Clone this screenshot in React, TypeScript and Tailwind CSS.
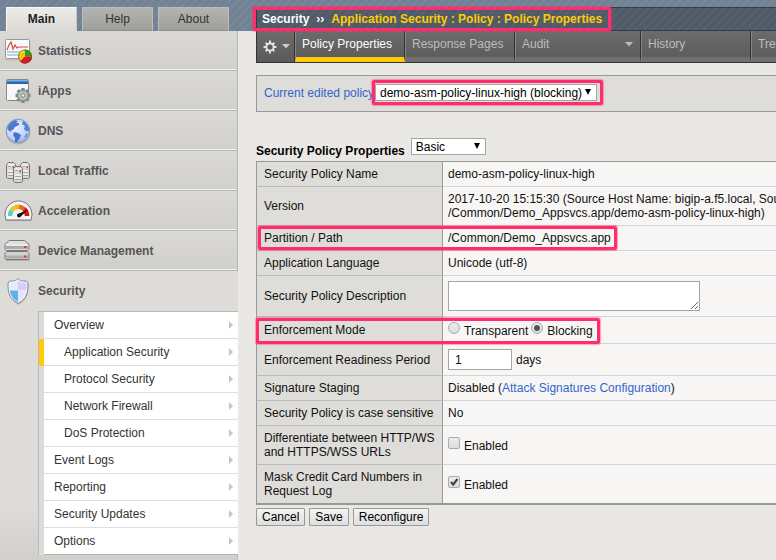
import React from "react";
import type { ReactNode } from "react";

function StatisticsIcon() {
  return (
    <svg width="30" height="28" viewBox="0 0 30 28" aria-hidden="true">
      <rect x="1.5" y="3" width="25" height="20.5" rx="1" fill="#aaa" opacity=".5" />
      <rect x="1.5" y="2.5" width="24" height="19" rx="1" fill="#fafafa" stroke="#999" />
      <path d="M3 15h21M3 18h14" stroke="#b9d0e8" strokeWidth="2" />
      <path d="M3 13l2-5 2-3 2 7 2-4 2 3 2-1h9" fill="none" stroke="#d4494d" strokeWidth="1.2" />
      <circle cx="21" cy="19.500" r="7" fill="#f3c40c" />
      <path d="M21 19.500V12.500a7 7 0 0 1 7 7z" fill="#25a021" />
      <path d="M21 19.500h7a7 7 0 0 1-12 5z" fill="#d91630" />
      <circle cx="21" cy="19.500" r="6.500" fill="none" stroke="#6b4a14" strokeOpacity=".6" />
      <path d="M16 17a6 6 0 0 1 4-3" stroke="#fff" strokeOpacity=".6" fill="none" />
    </svg>
  );
}

function IAppsIcon() {
  return (
    <svg width="30" height="28" viewBox="0 0 30 28" aria-hidden="true">
      <rect x="2.500" y="2.500" width="22" height="21" rx="1" fill="#f8f8fa" stroke="#888" />
      <path d="M3 3h21v4H3z" fill="#2b69ae" />
      <path d="M3 3h21v1.500H3z" fill="#79b1e6" />
      <g transform="translate(19 18.500)">
        <g stroke="#7f8987" strokeWidth="3.400">
          <path d="M0-7.500V7.500M-7.500 0H7.500M-5.300-5.300L5.300 5.300M5.300-5.300L-5.300 5.300" />
        </g>
        <circle r="5.500" fill="#adb5b3" stroke="#7f8987" />
        <circle r="3.200" fill="#c6cccb" />
        <circle r="1.800" fill="#f3f3f3" stroke="#737b7a" />
      </g>
    </svg>
  );
}

function DnsIcon() {
  return (
    <svg width="30" height="28" viewBox="0 0 30 28" aria-hidden="true">
      <defs>
        <radialGradient id="globe" cx=".4" cy=".35" r=".7">
          <stop offset="0" stopColor="#edf3ff" />
          <stop offset=".7" stopColor="#bcd0f7" />
          <stop offset="1" stopColor="#8ba9e3" />
        </radialGradient>
      </defs>
      <circle cx="14" cy="15.500" r="12" fill="#999" opacity=".5" />
      <circle cx="14" cy="14" r="11.800" fill="url(#globe)" stroke="#8593b0" />
      <path d="M4 9l3-4 4-2 3 1-2 2 3 0 0 2-4 2-2 3-2 0 1 2-3-1-2-3z" fill="#4f7ad2" />
      <path d="M10 15l4 1 3 2-1 3-3 4-2 0 0-4-2-3z" fill="#4874cf" />
      <path d="M19 4l3 2 3 5v3l-3 0-2-2 1-3-3-2z M22 17l2-1-2 4-2 1z" fill="#5680d8" />
    </svg>
  );
}

function Server({ x, y }: { x: number; y: number }) {
  return (
    <g transform={`translate(${x} ${y})`}>
      <path d="M.5 2.500l2-2h5l2 2v13l-1.500 1h-6l-1.500-1z" fill="#d9d9d9" stroke="#777" />
      <path d="M2 3h6M2 9h6M2 12h6" stroke="#fff" />
      <path d="M2 4.500h3M2 10.500h6M2 13.500h6" stroke="#a5a5a5" />
      <path d="M6.500 4h1.500v2H6.500z" fill="#f0353c" />
      <path d="M6.500 6.500h1.500V8H6.500z" fill="#76d85a" />
    </g>
  );
}

function LocalTrafficIcon() {
  return (
    <svg width="30" height="28" viewBox="0 0 30 28" aria-hidden="true">
      <Server x={2} y={5} />
      <Server x={16} y={5} />
      <Server x={9} y={9} />
    </svg>
  );
}

function AccelerationIcon() {
  return (
    <svg width="30" height="28" viewBox="0 0 30 28" aria-hidden="true">
      <path d="M.8 19c0-9 6-15 13.700-15s13.700 6 13.700 15l-1.200 5H2z" fill="#999" opacity=".6" />
      <path d="M1 18c0-8 6-14 13.500-14S28 10 28 18l-1 5H2z" fill="#f6f6f6" stroke="#777" />
      <g fill="none" strokeWidth="4.500">
        <path d="M6.200 19a8.600 8.600 0 0 1 1.400-5.500" stroke="#54d0c6" />
        <path d="M7.600 13.500a8.600 8.600 0 0 1 3.400-3" stroke="#d5cf2a" />
        <path d="M11 10.500a8.600 8.600 0 0 1 4-.8" stroke="#f0b716" />
        <path d="M15 9.700a8.600 8.600 0 0 1 5 2.300" stroke="#ee6a18" />
        <path d="M20 12a8.600 8.600 0 0 1 3 7" stroke="#dd1111" />
      </g>
      <path d="M24.500 12.500L16 20a2 2 0 0 1-2-3z" fill="#111" />
      <circle cx="15" cy="18.500" r="2" fill="#111" />
    </svg>
  );
}

function DeviceIcon() {
  return (
    <svg width="30" height="28" viewBox="0 0 30 28" aria-hidden="true">
      <path d="M1 22h25v2H2z" fill="#999" opacity=".6" />
      <path d="M5 3.500h15.500l4.500 4v5l-1 1H2l-1-1v-5z" fill="#dedede" stroke="#777" />
      <path d="M2 9h22v3H2z" fill="#aaa" />
      <path d="M2 8h22" stroke="#f4f4f4" />
      <path d="M3 14.500h20l2 2v5l-1 1H2l-1-1v-5z" fill="#d2d2d2" stroke="#777" />
      <path d="M2 18.500h22v3H2z" fill="#aeaeae" />
      <path d="M20 9h2.500v2H20zM20 18.500h2.500v2H20z" fill="#f0323a" />
    </svg>
  );
}

function ShieldIcon() {
  return (
    <svg width="30" height="28" viewBox="0 0 30 28" aria-hidden="true">
      <path d="M14.500 2c2.500 2 5 3 8 3l2 1c0 11-1 17-10 22-9-5-10-11-10-22l2-1c3 0 5.500-1 8-3z" fill="#999" opacity=".5" />
      <path d="M14 1.500c2 2 4.500 3 8 2.500l2 2c0 10-1 15-10 20.500C5 21 4 16 4 6l2-2c3.500.5 6-.5 8-2.500z" fill="#fff" stroke="#7d8797" />
      <path d="M14 3c-2 2-4.500 2.600-7.500 2.500L5.300 6.500c0 3 0 5 .5 7H14z" fill="#e3ecf6" />
      <path d="M14 3c2 2 4.500 2.600 7.500 2.500l1.200 1c0 3 0 5-.5 7H14z" fill="#d3cffa" />
      <path d="M5.800 13.500H14v11.800c-5-3.200-7.500-6.800-8.200-11.800z" fill="#62b0e8" />
      <path d="M22.200 13.500H14v11.800c5-3.200 7.500-6.800 8.200-11.800z" fill="#e6e3ff" />
    </svg>
  );
}

function GearIcon() {
  return (
    <svg width="14" height="14" viewBox="-7 -7 14 14" aria-hidden="true">
      <path d="M0-6.500V6.500M-6.500 0H6.500M-4.300-4.300L4.300 4.300M4.300-4.300L-4.300 4.300" stroke="#e2e2e2" strokeWidth="2" />
      <circle r="3.600" fill="#5c5c5c" stroke="#e2e2e2" strokeWidth="2" />
      <circle r="2.200" fill="#5c5c5c" />
    </svg>
  );
}

function DownArrow({ className }: { className: string }) {
  return (
    <svg width="8" height="5" viewBox="0 0 8 5" className={className} aria-hidden="true">
      <path d="M0 0h8L4 4.500z" fill="currentColor" />
    </svg>
  );
}

/* Pink outline that draws attention to part of the page. */
function Highlight({ className }: { className: string }) {
  return (
    <span
      aria-hidden="true"
      className={`pointer-events-none absolute z-10 rounded-[2px] border-[3px] border-[#ff2d6c] shadow-[0_0_1px_1px_rgba(255,45,108,0.4)] ${className}`}
    />
  );
}

const sections: { label: string; icon: ReactNode }[] = [
  { label: "Statistics", icon: <StatisticsIcon /> },
  { label: "iApps", icon: <IAppsIcon /> },
  { label: "DNS", icon: <DnsIcon /> },
  { label: "Local Traffic", icon: <LocalTrafficIcon /> },
  { label: "Acceleration", icon: <AccelerationIcon /> },
  { label: "Device Management", icon: <DeviceIcon /> },
];

const submenu = [
  { label: "Overview" },
  { label: "Application Security", nested: true, active: true },
  { label: "Protocol Security", nested: true },
  { label: "Network Firewall", nested: true },
  { label: "DoS Protection", nested: true },
  { label: "Event Logs" },
  { label: "Reporting" },
  { label: "Security Updates" },
  { label: "Options" },
];

const stripes =
  "bg-[#708294] bg-[repeating-linear-gradient(135deg,rgba(255,255,255,0.05)_0px,rgba(255,255,255,0.05)_2px,transparent_2px,transparent_6px)]";

function Sidebar() {
  return (
    <aside className="flex w-[238px] shrink-0 flex-col">
      <div className={`flex h-[31px] items-end gap-[5px] pl-[6px] ${stripes}`}>
        {["Main", "Help", "About"].map((tab, i) => (
          <button
            key={tab}
            type="button"
            className={`h-6 w-[71px] border text-center ${
              i === 0
                ? "border-[#f8f8f6] border-r-[#c8c8c4] border-b-[#dbdad6] bg-linear-to-b from-[#ecebe8] to-[#dbdad6] font-bold text-[#222]"
                : "border-[#bcbcba] border-b-[#8f8f8c] bg-linear-to-b from-[#b3b3af] to-[#9f9f9b] text-[#333]"
            }`}
          >
            {tab}
          </button>
        ))}
      </div>
      <nav className="flex flex-1 flex-col bg-linear-to-b from-[#dedcd9] from-90% to-[#d0cfcb]">
        {sections.map((s) => (
          <a
            key={s.label}
            href="#"
            className="flex h-10 items-center gap-1 border-r border-b border-[#b6b6b6] bg-linear-to-b from-[#dad9d6] to-[#d0cfcb] pl-1 font-bold text-[#555] shadow-[inset_0_-1px_0_#f0f0ee]"
          >
            {s.icon}
            {s.label}
          </a>
        ))}
        <a href="#" className="flex h-10 items-center gap-1 pl-1 font-bold text-[#555]">
          <ShieldIcon />
          Security
        </a>
        <ul className="ml-[38px] border-t border-l border-[#b9b9b9] bg-white">
          {submenu.map((m) => (
            <li
              key={m.label}
              className={`h-[27px] border-l-[5px] ${m.active ? "border-l-[#ffcb05]" : "border-l-[#dcdcdc]"}`}
            >
              <a
                href="#"
                className={`flex h-full items-center justify-between border-b pr-[5px] text-[#333] ${
                  m.nested ? "pl-5" : "pl-[10px]"
                } ${m.label === "Options" ? "border-b-[#b3b3b3]" : "border-b-[#dedede]"}`}
              >
                {m.label}
                <svg width="4" height="8" viewBox="0 0 4 8" aria-hidden="true">
                  <path d="M0 0l4 4-4 4z" fill="#c4c4c4" />
                </svg>
              </a>
            </li>
          ))}
        </ul>
        <div className="flex-1 border-r border-[#b6b6b6]" />
      </nav>
    </aside>
  );
}

const tabs = [
  { label: "Policy Properties", width: "w-[110px]", active: true },
  { label: "Response Pages", width: "w-[110px]" },
  { label: "Audit", width: "w-[126px]", menu: true },
  { label: "History", width: "w-[110px]" },
  { label: "Tree View", width: "w-[110px]" },
];

function TabBar() {
  return (
    <nav className="flex h-8 border-b border-l border-[#333] bg-linear-to-b from-[#6c6c6c] to-[#5a5a5a]">
      <button
        type="button"
        aria-label="Options"
        className="flex w-[38px] shrink-0 items-center gap-[5px] border-r border-[#333] pl-[6px]"
      >
        <GearIcon />
        <DownArrow className="text-[#ccc]" />
      </button>
      {tabs.map((t) => (
        <a
          key={t.label}
          href="#"
          className={`flex shrink-0 justify-between border-r border-b-[5px] border-l border-r-[#333] border-l-[#858585] pt-[6px] pr-[7px] pl-[6px] whitespace-nowrap ${t.width} ${
            t.active ? "border-b-[#ffcb05] text-white" : "border-b-[#707070] text-[#bdbdbd]"
          }`}
        >
          {t.label}
          {t.menu && <DownArrow className="mt-[5px] text-[#bbb]" />}
        </a>
      ))}
    </nav>
  );
}

function Select({ id, value, className }: { id: string; value: string; className: string }) {
  return (
    <span className="relative inline-flex">
      <select
        id={id}
        defaultValue={value}
        className={`h-[17px] appearance-none border border-[#a5a5a5] bg-white pl-1 text-black ${className}`}
      >
        <option>{value}</option>
      </select>
      <svg width="6" height="6" viewBox="0 0 6 6" className="pointer-events-none absolute top-[5px] right-[6px]" aria-hidden="true">
        <path d="M0 0h6L3 6z" fill="#000" />
      </svg>
    </span>
  );
}

function Row({ label, htmlFor, mark, children }: { label: ReactNode; htmlFor?: string; mark?: ReactNode; children: ReactNode }) {
  return (
    <tr className="group">
      <th
        scope="row"
        className="relative w-[187px] border-r border-b border-l border-[#999] border-b-[#bbb] bg-[#deddd9] px-[7px] py-[5px] text-left font-normal group-last:border-b-2 group-last:border-b-[#999]"
      >
        {htmlFor ? <label htmlFor={htmlFor}>{label}</label> : label}
        {mark}
      </th>
      <td className="border-b border-[#d5d5d5] bg-[#f7f6f5] px-[5px] py-[5px] whitespace-nowrap group-last:border-b-2 group-last:border-b-[#999]">
        {children}
      </td>
    </tr>
  );
}

function Mode({ label, checked }: { label: string; checked?: boolean }) {
  return (
    <label className="flex items-end gap-1">
      <span className="relative flex self-start">
        <input
          type="radio"
          name="mode"
          defaultChecked={checked}
          className="size-3 appearance-none rounded-full border border-[#aaa] bg-linear-to-b from-[#eee] to-[#dcdcdc]"
        />
        {checked && <span className="pointer-events-none absolute top-[3px] left-[3px] size-[6px] rounded-full bg-[#555]" />}
      </span>
      {label}
    </label>
  );
}

function Tick({ id, checked }: { id: string; checked?: boolean }) {
  return (
    <span className="flex items-end gap-1">
      <span className="relative mb-1 flex">
        <input
          id={id}
          type="checkbox"
          defaultChecked={checked}
          className="size-3 appearance-none rounded-[2px] border border-[#aaa] bg-linear-to-b from-[#eee] to-[#dcdcdc]"
        />
        {checked && (
          <svg width="12" height="12" viewBox="0 0 12 12" className="pointer-events-none absolute inset-0" aria-hidden="true">
            <path d="M3 6l2.200 2.500L9.500 3" fill="none" stroke="#444" strokeWidth="2.200" />
          </svg>
        )}
      </span>
      <label htmlFor={id}>Enabled</label>
    </span>
  );
}

export default function App() {
  return (
    <div className="flex min-h-screen overflow-hidden bg-[#e9e8e4] font-['Liberation_Sans',Arial,sans-serif] text-[12px] leading-[14px] text-[#111]">
      <Sidebar />
      <main className="min-w-0 flex-1">
        <header className={`h-[31px] pt-[7px] pl-[18px] ${stripes}`}>
          <div className="relative flex h-6 items-center gap-[7px] border-y border-l border-[#333b44] bg-[#4f5b67] bg-[repeating-linear-gradient(135deg,rgba(255,255,255,0.04)_0px,rgba(255,255,255,0.04)_2px,transparent_2px,transparent_6px)] pl-[5px] font-bold whitespace-nowrap text-white">
            <span>Security</span>
            <span>››</span>
            <span className="text-[#ffcb05]">Application Security : Policy : Policy Properties</span>
            <Highlight className="-top-[1px] -left-[4px] h-6 w-[358px]" />
          </div>
        </header>
        <div className="pl-[18px]">
          <TabBar />
          <div className="mt-3 flex h-[37px] items-center border border-r-0 border-[#999] bg-[#deddd9] pb-[2px] pl-[7px]">
            <label htmlFor="policy" className="w-[111px] whitespace-nowrap text-[#3366cc]">
              Current edited policy
            </label>
            <span className="relative flex">
              <Select id="policy" value="demo-asm-policy-linux-high (blocking)" className="w-[222px]" />
              <Highlight className="-inset-y-1 -right-[6px] -left-[3px]" />
            </span>
          </div>
          <div className="mt-[26px] mb-[3px] flex items-start gap-[6px]">
            <h1 className="pt-[6px] font-bold text-black">
              <label htmlFor="view">Security Policy Properties</label>
            </h1>
            <Select id="view" value="Basic" className="w-[75px]" />
          </div>
          <table className="w-full border-separate border-spacing-0 border-t border-[#999]">
            <tbody>
              <Row label="Security Policy Name">demo-asm-policy-linux-high</Row>
              <Row label="Version">
                <div className="w-0">
                  2017-10-20 15:15:30 (Source Host Name: bigip-a.f5.local, Source Policy:
                  <br />
                  /Common/Demo_Appsvcs.app/demo-asm-policy-linux-high)
                </div>
              </Row>
              <Row label="Partition / Path" mark={<Highlight className="top-0 left-[1px] h-6 w-[359px]" />}>
                /Common/Demo_Appsvcs.app
              </Row>
              <Row label="Application Language">Unicode (utf-8)</Row>
              <Row label="Security Policy Description" htmlFor="description">
                <textarea id="description" className="block h-[30px] w-[252px] border border-[#a5a5a5] bg-white" />
              </Row>
              <Row label="Enforcement Mode" mark={<Highlight className="top-[1px] -left-[1px] h-[26px] w-[344px]" />}>
                <div className="flex h-4 gap-[3px]">
                  <Mode label="Transparent" />
                  <Mode label="Blocking" checked />
                </div>
              </Row>
              <Row label="Enforcement Readiness Period" htmlFor="period">
                <div className="flex items-center gap-1">
                  <input id="period" type="text" defaultValue="1" className="h-[21px] w-16 border border-[#a5a5a5] bg-white px-[6px]" />
                  days
                </div>
              </Row>
              <Row label="Signature Staging">
                Disabled (
                <a href="#" className="text-[#3366cc]">
                  Attack Signatures Configuration
                </a>
                )
              </Row>
              <Row label="Security Policy is case sensitive">No</Row>
              <Row
                htmlFor="differentiate"
                label={
                  <>
                    Differentiate between HTTP/WS
                    <br />
                    and HTTPS/WSS URLs
                  </>
                }
              >
                <Tick id="differentiate" />
              </Row>
              <Row htmlFor="mask" label="Mask Credit Card Numbers in Request Log">
                <Tick id="mask" checked />
              </Row>
            </tbody>
          </table>
          <div className="mt-[3px] flex gap-1">
            {["Cancel", "Save", "Reconfigure"].map((b) => (
              <button
                key={b}
                type="button"
                className="h-[18px] rounded-[1px] border border-[#999] bg-linear-to-b from-[#f4f4f4] to-[#dedede] px-[5px] text-black"
              >
                {b}
              </button>
            ))}
          </div>
        </div>
      </main>
    </div>
  );
}
